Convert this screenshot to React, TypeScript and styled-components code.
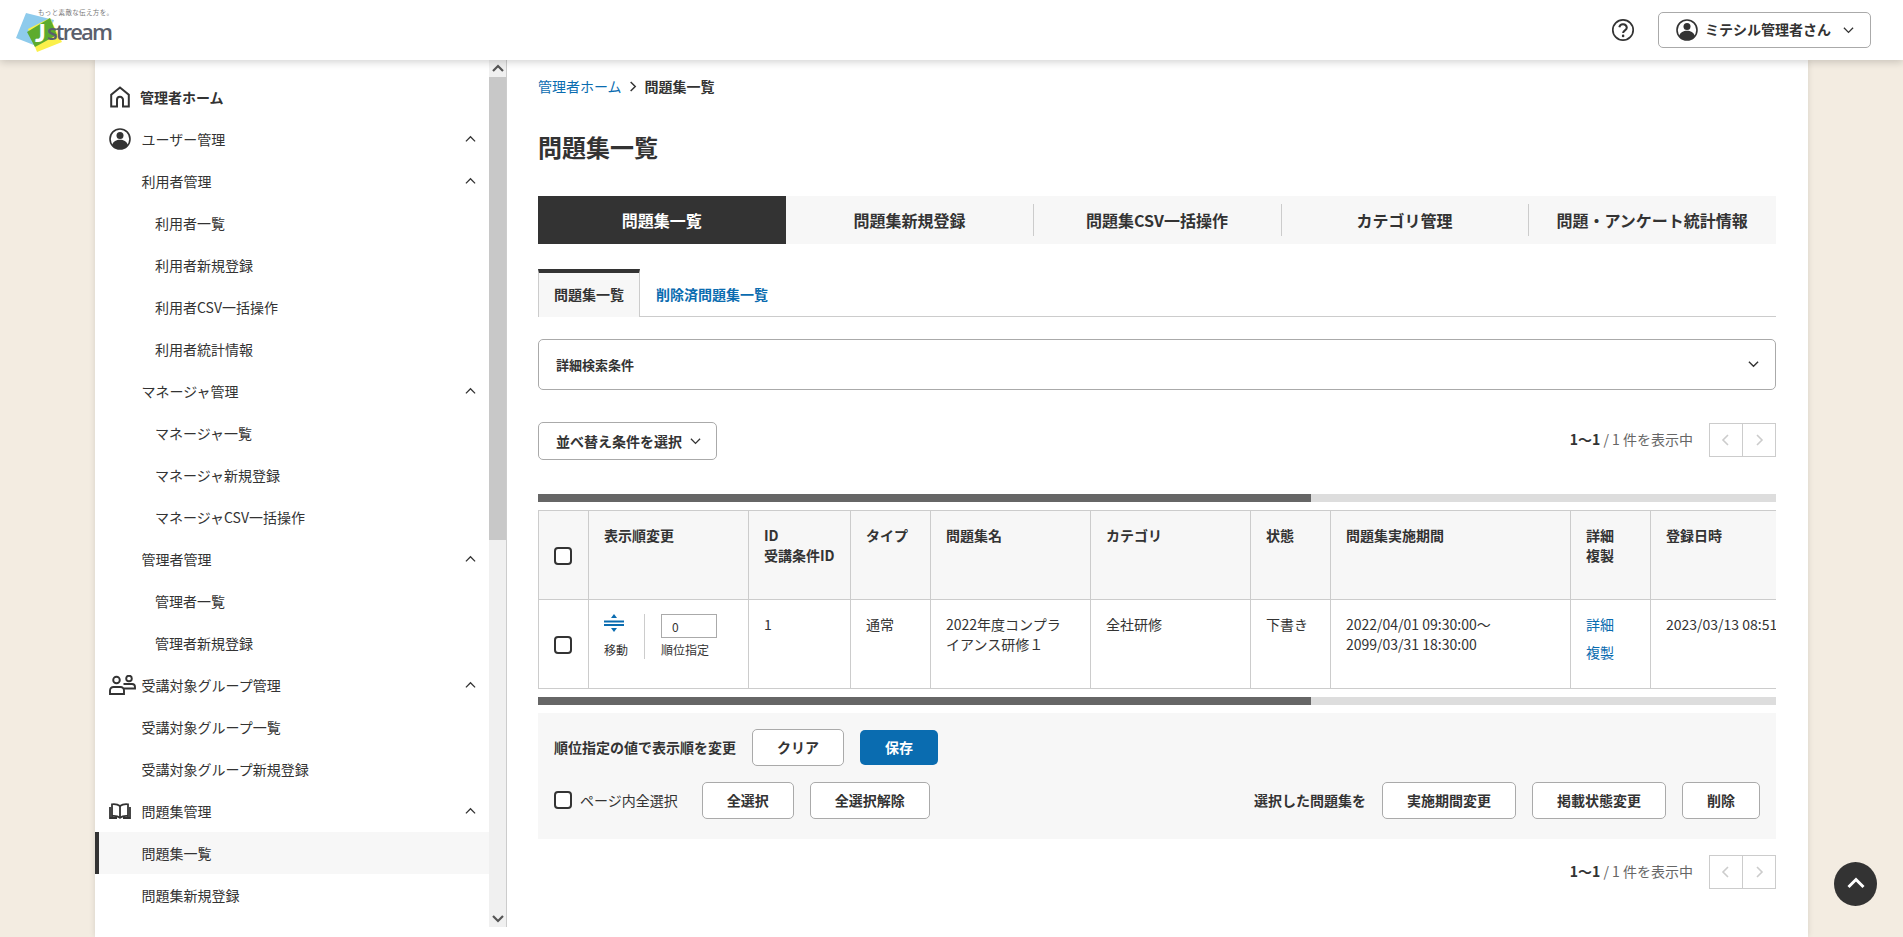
import styled, { createGlobalStyle } from 'styled-components';

const GlobalStyle = createGlobalStyle`
  html, body {
    margin: 0;
    height: 100%;
    overflow: hidden;
    background: #f3ece1;
    color: #333;
    font-family: "Noto Sans CJK JP", "Noto Sans", sans-serif;
    font-size: 14px;
  }
  * { box-sizing: border-box; }
`;

type Dir = 'up' | 'down' | 'left' | 'right';

const chevronPoints: Record<Dir, string> = {
  up: '1,8 6,3 11,8',
  down: '1,3 6,8 11,3',
  left: '8,1 3,6 8,11',
  right: '4,1 9,6 4,11',
};

function Chevron({ dir, size = 12, width = 1.5, color = '#333' }: { dir: Dir; size?: number; width?: number; color?: string }) {
  return (
    <svg width={size} height={size} viewBox="0 0 12 12" fill="none">
      <polyline points={chevronPoints[dir]} stroke={color} strokeWidth={width} />
    </svg>
  );
}

function UserIcon({ size = 22 }: { size?: number }) {
  return (
    <svg width={size} height={size} viewBox="0 0 22 22">
      <circle cx="11" cy="11" r="10" fill="none" stroke="#333" strokeWidth="1.6" />
      <circle cx="11" cy="7.4" r="3.5" fill="#333" />
      <path d="M3.2 17c1-3.800 4.300-5.200 7.800-5.200s6.800 1.400 7.800 5.200A10 10 0 0 1 11 21a10 10 0 0 1-7.800-4z" fill="#333" />
    </svg>
  );
}

function HomeIcon() {
  return (
    <svg width="22" height="22" viewBox="0 0 22 22" fill="none" stroke="#333" strokeWidth="2">
      <path d="M8 20.500H2.200V8.800L11 1.600l8.800 7.200v11.700H14v-6.700a3 3 0 0 0-6 0z" />
    </svg>
  );
}

function GroupIcon() {
  return (
    <svg width="27" height="20" viewBox="0 0 27 20" fill="none" stroke="#333" strokeWidth="1.9">
      <circle cx="7.500" cy="5" r="3.300" />
      <circle cx="20" cy="3.500" r="2.800" />
      <path d="M1 19v-3.500c0-2 1.500-3.500 3.500-3.500h7c2 0 3.500 1.500 3.500 3.500V19z" />
      <path d="M14.500 9h8.500c1.800 0 3 1.300 3 3v1.500h-11" />
    </svg>
  );
}

function BookIcon() {
  return (
    <svg width="22" height="17" viewBox="0 0 22 17" fill="none" stroke="#333" strokeWidth="1.800">
      <path d="M11 3C9 1.500 6 1 3 1.300V13c3-.3 6 .2 8 1.800 2-1.600 5-2.100 8-1.800V1.300C16 1 13 1.500 11 3z" />
      <path d="M11 3v12M1 4v11h7M21 4v11h-7" />
    </svg>
  );
}

function HelpIcon() {
  return (
    <svg width="24" height="24" viewBox="0 0 24 24" fill="none" stroke="#333" strokeWidth="1.700">
      <circle cx="12" cy="12" r="10.200" />
      <path d="M8.300 9.300a3.800 3.800 0 0 1 7.500.400c0 2.500-3.700 2.800-3.700 5.300" strokeWidth="2" />
      <circle cx="12.100" cy="17.900" r="1.300" fill="#333" stroke="none" />
    </svg>
  );
}

function MoveIcon() {
  return (
    <svg width="20" height="18" viewBox="0 0 20 18" fill="#0a6cb0">
      <polygon points="10,0 13,4 7,4" />
      <rect x="0" y="6.500" width="20" height="2" />
      <rect x="0" y="10" width="20" height="2" />
      <polygon points="10,18 13,14 7,14" />
    </svg>
  );
}

function Logo() {
  return (
    <LogoBox>
      <svg width="100" height="46" viewBox="0 0 100 46">
        <polygon points="10,6 38,13 28,42 0,31" fill="#8ecbec" />
        <polygon points="34,11 46,35 21,45 12,22" fill="#fbf04a" />
        <polygon points="11,25 34,11 41,28 19,40" fill="#5dab2e" />
        <text x="19" y="35" fontFamily="Lato, sans-serif" fontWeight="900" fontSize="25" fill="#fff">J</text>
        <text x="31" y="33" fontFamily="'Open Sans', sans-serif" fontWeight="600" fontSize="22" textLength="66" fill="#5a5f6c">stream</text>
        <text x="22" y="7.500" fontFamily="'Noto Sans CJK JP', sans-serif" fontSize="6.500" textLength="75" fill="#777">もっと素敵な伝え方を。</text>
      </svg>
    </LogoBox>
  );
}

type NavEntry = { label: string; level: 1 | 2; icon?: 'home' | 'user' | 'group' | 'book'; open?: boolean; bold?: boolean; active?: boolean };

const navEntries: NavEntry[] = [
  { label: '管理者ホーム', level: 1, icon: 'home', bold: true },
  { label: 'ユーザー管理', level: 1, icon: 'user', open: true },
  { label: '利用者管理', level: 1, open: true },
  { label: '利用者一覧', level: 2 },
  { label: '利用者新規登録', level: 2 },
  { label: '利用者CSV一括操作', level: 2 },
  { label: '利用者統計情報', level: 2 },
  { label: 'マネージャ管理', level: 1, open: true },
  { label: 'マネージャ一覧', level: 2 },
  { label: 'マネージャ新規登録', level: 2 },
  { label: 'マネージャCSV一括操作', level: 2 },
  { label: '管理者管理', level: 1, open: true },
  { label: '管理者一覧', level: 2 },
  { label: '管理者新規登録', level: 2 },
  { label: '受講対象グループ管理', level: 1, icon: 'group', open: true },
  { label: '受講対象グループ一覧', level: 1 },
  { label: '受講対象グループ新規登録', level: 1 },
  { label: '問題集管理', level: 1, icon: 'book', open: true },
  { label: '問題集一覧', level: 1, active: true },
  { label: '問題集新規登録', level: 1 },
];

const navIcons = {
  home: <HomeIcon />,
  user: <UserIcon />,
  group: <GroupIcon />,
  book: <BookIcon />,
};

const tabs = ['問題集一覧', '問題集新規登録', '問題集CSV一括操作', 'カテゴリ管理', '問題・アンケート統計情報'];

function Pagination() {
  return (
    <PagerWrap>
      <PagerText>
        <strong>1〜1</strong> <span>/ 1 件を表示中</span>
      </PagerText>
      <PagerButtons>
        <PagerCell><Chevron dir="left" color="#ccc" width={1.6} /></PagerCell>
        <PagerCell><Chevron dir="right" color="#ccc" width={1.6} /></PagerCell>
      </PagerButtons>
    </PagerWrap>
  );
}

export default function App() {
  return (
    <>
      <GlobalStyle />
      <Header>
        <Logo />
        <HeaderRight>
          <HelpIcon />
          <UserButton>
            <UserIcon />
            <UserName>ミテシル管理者さん</UserName>
            <Chevron dir="down" size={11} width={1.4} />
          </UserButton>
        </HeaderRight>
      </Header>

      <Wrapper>
        <SideColumn>
          <Nav>
            {navEntries.map((item) => (
              <NavRow key={item.label} $level={item.level} $active={item.active} $bold={item.bold} $hasIcon={!!item.icon}>
                {item.icon && <IconSlot $narrow={item.bold}>{navIcons[item.icon]}</IconSlot>}
                <span>{item.label}</span>
                {item.open && (
                  <NavChevron>
                    <Chevron dir="up" size={11} width={1.4} />
                  </NavChevron>
                )}
              </NavRow>
            ))}
          </Nav>
          <FakeScrollbar>
            <ScrollArrow><Chevron dir="up" size={12} width={2.2} color="#555" /></ScrollArrow>
            <ScrollThumb />
            <ScrollRest />
            <ScrollArrow><Chevron dir="down" size={12} width={2.2} color="#555" /></ScrollArrow>
          </FakeScrollbar>
        </SideColumn>

        <Main>
          <Breadcrumb>
            <BlueLink>管理者ホーム</BlueLink>
            <Chevron dir="right" size={11} width={1.6} />
            <CrumbCurrent>問題集一覧</CrumbCurrent>
          </Breadcrumb>
          <Title>問題集一覧</Title>

          <TabBar>
            {tabs.map((t, i) => (
              <Tab key={t} $active={i === 0} $divider={i > 1}>{t}</Tab>
            ))}
          </TabBar>

          <SubTabs>
            <SubTabActive>問題集一覧</SubTabActive>
            <SubTabLink>削除済問題集一覧</SubTabLink>
          </SubTabs>

          <Accordion>
            <span>詳細検索条件</span>
            <Chevron dir="down" size={11} width={1.5} />
          </Accordion>

          <SortRow>
            <SortButton>
              <SortLabel>並べ替え条件を選択</SortLabel>
              <Chevron dir="down" size={11} width={1.4} />
            </SortButton>
            <Pagination />
          </SortRow>

          <ScrollBar />
          <TableClip>
            <Table>
              <colgroup>
                <col style={{ width: 50 }} />
                <col style={{ width: 160 }} />
                <col style={{ width: 102 }} />
                <col style={{ width: 80 }} />
                <col style={{ width: 160 }} />
                <col style={{ width: 160 }} />
                <col style={{ width: 80 }} />
                <col style={{ width: 240 }} />
                <col style={{ width: 80 }} />
                <col style={{ width: 200 }} />
              </colgroup>
              <thead>
                <tr>
                  <CheckCell as="th"><CheckBox /></CheckCell>
                  <Th>表示順変更</Th>
                  <Th>ID<br />受講条件ID</Th>
                  <Th>タイプ</Th>
                  <Th>問題集名</Th>
                  <Th>カテゴリ</Th>
                  <Th>状態</Th>
                  <Th>問題集実施期間</Th>
                  <Th>詳細<br />複製</Th>
                  <Th>登録日時</Th>
                </tr>
              </thead>
              <tbody>
                <tr>
                  <CheckCell><CheckBox /></CheckCell>
                  <Td>
                    <OrderCell>
                      <MoveBlock>
                        <MoveIcon />
                        <SmallLabel>移動</SmallLabel>
                      </MoveBlock>
                      <RankBlock>
                        <RankInput>0</RankInput>
                        <SmallLabel>順位指定</SmallLabel>
                      </RankBlock>
                    </OrderCell>
                  </Td>
                  <Td>1</Td>
                  <Td>通常</Td>
                  <Td>2022年度コンプライアンス研修１</Td>
                  <Td>全社研修</Td>
                  <Td>下書き</Td>
                  <Td>2022/04/01 09:30:00〜<br />2099/03/31 18:30:00</Td>
                  <Td>
                    <BlueLink>詳細</BlueLink>
                    <SecondLink>複製</SecondLink>
                  </Td>
                  <Td>2023/03/13 08:51:00</Td>
                </tr>
              </tbody>
            </Table>
          </TableClip>
          <ScrollBarBottom />

          <ActionBar>
            <ActionRow>
              <ActionLabel>順位指定の値で表示順を変更</ActionLabel>
              <OutlineButton>クリア</OutlineButton>
              <SaveButton>保存</SaveButton>
            </ActionRow>
            <ActionRowSecond>
              <CheckLabel>
                <CheckBox />
                ページ内全選択
              </CheckLabel>
              <OutlineButton>全選択</OutlineButton>
              <OutlineButton>全選択解除</OutlineButton>
              <RightGroup>
                <ActionLabel>選択した問題集を</ActionLabel>
                <OutlineButton>実施期間変更</OutlineButton>
                <OutlineButton>掲載状態変更</OutlineButton>
                <OutlineButton>削除</OutlineButton>
              </RightGroup>
            </ActionRowSecond>
          </ActionBar>

          <BottomPager>
            <Pagination />
          </BottomPager>
        </Main>
      </Wrapper>

      <BackToTop>
        <Chevron dir="up" size={18} width={2} color="#fff" />
      </BackToTop>
    </>
  );
}

const Header = styled.header`
  position: relative;
  z-index: 2;
  display: flex;
  align-items: center;
  justify-content: space-between;
  height: 60px;
  padding: 0 32px 0 16px;
  background: #fff;
  box-shadow: 0 2px 8px rgba(0, 0, 0, 0.18);
`;

const LogoBox = styled.div`
  display: flex;
`;

const HeaderRight = styled.div`
  display: flex;
  align-items: center;
  gap: 23px;
`;

const UserButton = styled.div`
  display: flex;
  align-items: center;
  width: 213px;
  height: 36px;
  padding-left: 17px;
  background: #fff;
  border: 1px solid #aaa;
  border-radius: 5px;
`;

const UserName = styled.span`
  margin: 0 12px 0 7px;
  padding-bottom: 2px;
  font-weight: 700;
  font-size: 14px;
  line-height: 20px;
`;

const Wrapper = styled.div`
  display: flex;
  width: 1713px;
  height: 877px;
  margin-left: 95px;
  background: #fff;
  box-shadow: 0 0 6px rgba(0, 0, 0, 0.12);
`;

const SideColumn = styled.aside`
  display: flex;
  flex: none;
  width: 412px;
  height: 867px;
  border-right: 1px solid #ccc;
`;

const Nav = styled.nav`
  flex: 1;
  min-width: 0;
  padding-top: 16px;
  overflow: hidden;
`;

const NavRow = styled.div<{ $level: 1 | 2; $active?: boolean; $bold?: boolean; $hasIcon?: boolean }>`
  display: flex;
  align-items: center;
  height: 42px;
  padding-left: ${(p) => (p.$hasIcon ? 14 : p.$level === 2 ? 60 : 46.5)}px;
  padding-right: 13px;
  font-size: 14px;
  font-weight: ${(p) => (p.$bold ? 700 : 400)};
  background: ${(p) => (p.$active ? '#f7f7f7' : 'transparent')};
  box-shadow: ${(p) => (p.$active ? 'inset 4px 0 0 #333' : 'none')};
`;

const IconSlot = styled.span<{ $narrow?: boolean }>`
  display: flex;
  align-items: center;
  flex: none;
  width: ${(p) => (p.$narrow ? 31 : 32.5)}px;
`;

const NavChevron = styled.span`
  display: flex;
  margin-left: auto;
`;

const FakeScrollbar = styled.div`
  display: flex;
  flex-direction: column;
  flex: none;
  width: 17px;
  background: #f0f0f0;
`;

const ScrollArrow = styled.div`
  display: flex;
  align-items: center;
  justify-content: center;
  flex: none;
  height: 17px;
`;

const ScrollThumb = styled.div`
  flex: none;
  height: 463px;
  background: #c8c8c8;
`;

const ScrollRest = styled.div`
  flex: 1;
`;

const Main = styled.main`
  flex: 1;
  min-width: 0;
  padding: 16px 32px 0 31px;
`;

const Breadcrumb = styled.div`
  display: flex;
  align-items: center;
  gap: 5px;
  height: 20px;
  font-size: 14px;
  line-height: 20px;
`;

const BlueLink = styled.div`
  color: #0a6cb0;
`;

const CrumbCurrent = styled.span`
  margin-left: 2px;
  font-weight: 700;
`;

const Title = styled.h1`
  margin: 33px 0 0;
  font-size: 24px;
  line-height: 36px;
  font-weight: 700;
`;

const TabBar = styled.div`
  display: grid;
  grid-template-columns: repeat(5, 1fr);
  height: 48px;
  margin-top: 31px;
  background: #f7f7f7;
`;

const Tab = styled.div<{ $active?: boolean; $divider?: boolean }>`
  position: relative;
  display: flex;
  align-items: center;
  justify-content: center;
  font-size: 16px;
  font-weight: 700;
  color: ${(p) => (p.$active ? '#fff' : '#333')};
  background: ${(p) => (p.$active ? '#333' : 'transparent')};

  &::before {
    content: '';
    display: ${(p) => (p.$divider ? 'block' : 'none')};
    position: absolute;
    left: 0;
    top: 8px;
    bottom: 8px;
    width: 1px;
    background: #ccc;
  }
`;

const SubTabs = styled.div`
  display: flex;
  align-items: stretch;
  height: 48px;
  margin-top: 25px;
  border-bottom: 1px solid #ccc;
`;

const SubTabActive = styled.div`
  display: flex;
  align-items: center;
  justify-content: center;
  width: 102px;
  height: 48px;
  padding-bottom: 2px;
  font-size: 14px;
  font-weight: 700;
  background: #f7f7f7;
  border-top: 4px solid #333;
  border-left: 1px solid #ccc;
  border-right: 1px solid #ccc;
`;

const SubTabLink = styled.div`
  display: flex;
  align-items: center;
  padding: 2px 0 0 16px;
  font-size: 14px;
  font-weight: 700;
  color: #0a6cb0;
`;

const Accordion = styled.div`
  display: flex;
  align-items: center;
  justify-content: space-between;
  height: 51px;
  margin-top: 22px;
  padding: 0 16px 0 17px;
  font-size: 13px;
  font-weight: 700;
  border: 1px solid #aaa;
  border-radius: 5px;
`;

const SortRow = styled.div`
  display: flex;
  align-items: center;
  justify-content: space-between;
  height: 38px;
  margin-top: 32px;
`;

const SortButton = styled.div`
  display: flex;
  align-items: center;
  gap: 8px;
  width: 179px;
  height: 38px;
  padding-left: 17px;
  font-size: 14px;
  font-weight: 700;
  border: 1px solid #aaa;
  border-radius: 5px;
`;

const SortLabel = styled.span`
  padding-bottom: 1px;
`;

const PagerWrap = styled.div`
  display: flex;
  align-items: center;
  gap: 16px;
  margin-bottom: 2px;
`;

const PagerText = styled.div`
  padding-bottom: 2px;
  font-size: 14px;
  line-height: 20px;
  color: #333;

  span {
    color: #666;
  }
`;

const PagerButtons = styled.div`
  display: flex;
  width: 67px;
  height: 34px;
  border: 1px solid #ccc;
`;

const PagerCell = styled.div`
  display: flex;
  align-items: center;
  justify-content: center;
  flex: 1;

  & + & {
    border-left: 1px solid #ccc;
  }
`;

const ScrollBar = styled.div`
  height: 8px;
  margin-top: 34px;
  background: linear-gradient(to right, #666 0, #666 773px, #ddd 773px);
`;

const ScrollBarBottom = styled(ScrollBar)`
  margin-top: 8px;
`;

const TableClip = styled.div`
  margin-top: 8px;
  overflow: hidden;
`;

const Table = styled.table`
  table-layout: fixed;
  width: 1312px;
  border-collapse: collapse;
  font-size: 14px;
  line-height: 20px;
`;

const Th = styled.th`
  height: 89px;
  padding: 14px 4px 16px 15px;
  text-align: left;
  vertical-align: top;
  font-weight: 700;
  background: #f7f7f7;
  border: 1px solid #ccc;
`;

const Td = styled.td`
  height: 89px;
  padding: 14px 16px 14px 15px;
  text-align: left;
  vertical-align: top;
  border: 1px solid #ccc;
`;

const CheckCell = styled.td`
  padding: 0 1px 2px 0;
  text-align: center;
  vertical-align: middle;
  border: 1px solid #ccc;
  background: ${(p) => (p.as === 'th' ? '#f7f7f7' : '#fff')};
`;

const CheckBox = styled.span`
  display: inline-block;
  flex: none;
  width: 18px;
  height: 18px;
  vertical-align: middle;
  background: #fff;
  border: 2px solid #333;
  border-radius: 4px;
`;

const OrderCell = styled.div`
  display: flex;
  align-items: flex-start;
  height: 45px;
`;

const MoveBlock = styled.div`
  display: flex;
  flex-direction: column;
  align-items: flex-start;
  width: 41px;
  height: 45px;
  border-right: 1px solid #ccc;
`;

const RankBlock = styled.div`
  display: flex;
  flex-direction: column;
  margin-left: 16px;
`;

const SmallLabel = styled.div`
  margin-top: 9px;
  font-size: 12px;
  line-height: 18px;
`;

const RankInput = styled.div`
  width: 56px;
  height: 24px;
  margin-bottom: -6px;
  padding-left: 10px;
  font-size: 12px;
  line-height: 24px;
  border: 1px solid #aaa;
`;

const SecondLink = styled(BlueLink)`
  margin-top: 8px;
`;

const ActionBar = styled.div`
  height: 126px;
  margin-top: 8px;
  padding: 16px 16px 0;
  background: #f7f7f7;
`;

const ActionRow = styled.div`
  display: flex;
  align-items: center;
  gap: 16px;
  height: 37px;
`;

const ActionRowSecond = styled(ActionRow)`
  margin-top: 16px;
`;

const ActionLabel = styled.span`
  padding-bottom: 2px;
  font-size: 14px;
  font-weight: 700;
`;

const OutlineButton = styled.div`
  display: flex;
  align-items: center;
  justify-content: center;
  height: 37px;
  padding: 0 24px 1px;
  font-size: 14px;
  font-weight: 700;
  background: #fff;
  border: 1px solid #aaa;
  border-radius: 5px;
`;

const SaveButton = styled(OutlineButton)`
  height: 35px;
  padding: 0 25px 1px;
  color: #fff;
  background: #0a6cb0;
  border: none;
`;

const CheckLabel = styled.label`
  display: flex;
  align-items: center;
  gap: 8px;
  margin-right: 8px;
  padding-bottom: 1px;
  font-size: 14px;
`;

const RightGroup = styled.div`
  display: flex;
  align-items: center;
  gap: 16px;
  margin-left: auto;
`;

const BottomPager = styled.div`
  display: flex;
  justify-content: flex-end;
  margin-top: 16px;
`;

const BackToTop = styled.div`
  position: fixed;
  right: 26px;
  bottom: 31px;
  z-index: 3;
  display: flex;
  align-items: center;
  justify-content: center;
  width: 43px;
  height: 44px;
  background: #333;
  border-radius: 50%;
`;
